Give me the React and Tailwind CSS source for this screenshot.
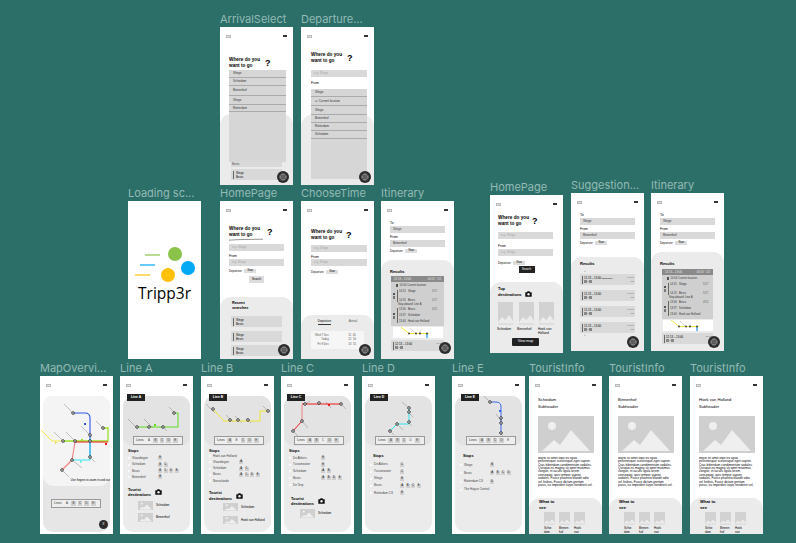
import React from 'react';

const Frame = ({ label, pos, children }) => (
  <div className={`absolute w-[73px] ${pos}`}>
    <div className="h-[15px] text-[11px] leading-[14px] text-[#94bab5] whitespace-nowrap font-['Inter',sans-serif]">{label}</div>
    <div className="relative h-[158px] flex flex-col overflow-hidden bg-white text-black text-[3px] font-['Liberation_Sans',sans-serif]">
      {children}
    </div>
  </div>
);

const StatusBar = () => (
  <div className="h-[11px] shrink-0 flex justify-between items-start px-[6px] pt-[8px]">
    <div className="w-[5px] h-[3px] border-[0.5px] border-[#bbb] bg-[#e5e5e5]" />
    <div className="w-[4px] h-[2px] bg-[#333]" />
  </div>
);

const Fab = ({ pos }) => (
  <div className={`absolute w-[12px] h-[12px] rounded-full bg-[#2c2c2c] flex items-center justify-center ${pos}`}>
    <svg width="8" height="8" viewBox="0 0 8 8" fill="none" stroke="#bbb" strokeWidth="0.7">
      <rect x="2" y="1" width="4" height="6" rx="1.2" />
      <path d="M4 1v6M1 2.5v3M7 2.5v3" />
    </svg>
  </div>
);

const Title = ({ cls, gap }) => (
  <div className={`relative flex items-center ${cls}`}>
    <div className="text-[4.7px] leading-[6px] font-bold whitespace-nowrap">Where do you<br />want to go</div>
    <div className={`text-[9px] leading-[9px] font-bold ${gap}`}>?</div>
  </div>
);

const Input = ({ text, cls = '', dark }) => (
  <div className={`mx-[9px] h-[7px] shrink-0 bg-[#d9d9d9] flex items-center px-[3px] text-[3px] ${dark ? 'text-[#333]' : 'text-[#a5a5a5]'} ${cls}`}>{text}</div>
);

const Lab = ({ text, cls = '' }) => (
  <div className={`mx-[9px] h-[4px] shrink-0 text-[3.4px] leading-[4px] font-medium ${cls}`}>{text}</div>
);

const Departure = ({ cls = '', chip = 'Now' }) => (
  <div className={`mx-[9px] h-[4px] shrink-0 flex items-center gap-[2px] text-[2.8px] ${cls}`}>
    <span className="font-medium">Departure:</span>
    <span className="w-[12px] h-[4px] bg-[#ddd] text-center text-[2.6px] leading-[4px]">{chip}</span>
  </div>
);

const Panel = ({ cls, children }) => (
  <div className={`mt-auto shrink-0 bg-[#ebebeb] rounded-t-[11px] ${cls}`}>{children}</div>
);

const Recent = ({ cls = '', a = 'Slinge', b = 'Beurs' }) => (
  <div className={`h-[11px] bg-[#d9d9d9] flex items-center px-[2px] gap-[2px] text-[2.8px] leading-[4px] ${cls}`}>
    <div className="w-[1px] h-[8px] bg-[#666]" />
    <div>{a}<br />{b}</div>
  </div>
);

const DropRows = ({ rows }) => (
  <>
    {rows.map((r) => (
      <div key={r.t + r.h} className={`border-b-[0.5px] border-[#aaa] px-[4px] text-[3px] text-[#333] flex items-center gap-[1px] ${r.h}`}>{r.t}</div>
    ))}
  </>
);

const Camera = () => (
  <svg width="7" height="6" viewBox="0 0 7 6" className="shrink-0">
    <path d="M0.3 1.3h1.6l.6-1h2l.6 1h1.6v4.4H.3z" fill="#111" />
    <circle cx="3.5" cy="3.3" r="1.2" fill="#eee" />
  </svg>
);

const Pic = ({ w, h }) => (
  <svg width={w} height={h} viewBox="0 0 56 37" preserveAspectRatio="none" className="shrink-0">
    <rect width="56" height="37" fill="#cfcfcf" />
    <circle cx="14" cy="10" r="4" fill="#efefef" />
    <path d="M4 35 16 24l6 5 11-15 19 21z" fill="#efefef" />
  </svg>
);

const Bookmark = ({ w, h }) => (
  <svg width={w} height={h} viewBox="0 0 15 23" preserveAspectRatio="none" className="shrink-0">
    <rect width="15" height="20" fill="#d2d2d2" />
    <path d="M0 20 4 15l3.5 3L11 13l4 6v1z" fill="#ebebeb" />
    <rect y="21" width="15" height="2" fill="#dedede" />
  </svg>
);

const Tick = ({ x, y, l = 9 }) => <line x1={x - l} y1={y - l} x2={x + l * 0.2} y2={y + l * 0.2} stroke="#888" strokeWidth="0.5" />;
const Stn = ({ x, y }) => <circle cx={x} cy={y} r="1.3" fill="#fff" stroke="#111" strokeWidth="0.8" />;

const LinesBox = ({ active, cls }) => (
  <div className={`relative w-[50px] h-[9px] border-[0.5px] border-[#999] bg-[#eee] flex items-center gap-[1.8px] px-[2px] text-[3.2px] text-[#333] ${cls}`}>
    <span className="mr-[1px]">Lines</span>
    {['A', 'B', 'C', 'D', 'E'].map((l) => (
      <span key={l} className={`w-[4.8px] h-[4.8px] flex items-center justify-center text-[2.8px] ${l === active ? '' : 'bg-[#cfcfcf]'}`}>{l}</span>
    ))}
  </div>
);

const Stop = ({ name, lines, h = 'h-[6.4px]', w = 'w-[26px]' }) => (
  <div className={`flex items-center ${h}`}>
    <span className="w-[2px] h-[2px] rounded-full bg-white mr-[2px]" />
    <span className={`text-[3px] text-[#444] whitespace-nowrap ${w}`}>{name}</span>
    <span className="flex gap-[1.5px]">
      {lines.map((l) => (
        <span key={l} className="w-[4px] h-[4px] bg-[#cfcfcf] flex items-center justify-center text-[2.6px]">{l}</span>
      ))}
    </span>
  </div>
);

const Dest = ({ name, w, h, cls }) => (
  <div className={`flex items-center gap-[3px] text-[3px] font-medium ${cls}`}>
    <Pic w={w} h={h} />
    <span className="whitespace-nowrap">{name}</span>
  </div>
);

const LineScreen = ({ letter, chipPos, box, children, body }) => (
  <>
    <StatusBar />
    <div className="relative mx-[3px] mt-[9px] h-[136px] bg-[#ebebeb] rounded-[10px]">
      <div className="h-[50px] bg-[#e3e3e3] rounded-[10px]">
        <svg width="67" height="50" viewBox="3 20 67 50" className="overflow-visible">{children}</svg>
      </div>
      <div className={`absolute top-[-2px] w-[18px] h-[7px] bg-[#222] text-white text-[3.4px] font-bold flex items-center justify-center ${chipPos}`}>Line {letter}</div>
      <LinesBox active={letter} cls={`mt-[-10px] ${box}`} />
      {body}
    </div>
  </>
);

const StopsHead = ({ cls }) => <div className={`text-[3.8px] leading-[4px] font-bold ${cls}`}>Stops</div>;

const TouristHead = ({ cls }) => (
  <div className={`flex items-center gap-[4px] text-[3.9px] leading-[5.5px] font-bold ${cls}`}>
    <div className="whitespace-nowrap">Tourist<br />destinations</div>
    <Camera />
  </div>
);

const Tourist = ({ name, labels }) => (
  <>
    <StatusBar />
    <div className="mx-[9px] mt-[10px] text-[4.1px] leading-[6.8px] font-medium whitespace-nowrap">{name}<br />Subheader</div>
    <div className="mx-[9px] mt-[5px]"><Pic w={56} h={37} /></div>
    <p className="mx-[9px] mt-[4px] text-[3.15px] leading-[3.45px] text-black h-[38px] overflow-hidden">
      Morbi sit amet odio eu ligula pellentesque scelerisque eget sapien. Cras bibendum condimentum sodales. Quisque eu magna sit amet maximus congue, in iaculis ligula lorem consequat, quis tempor sapien sodales. Fusce pharetra blandit odio vel finibus. Fusce dictum pretium purus, eu imperdiet turpis hendrerit vel.
    </p>
    <Panel cls="h-[36px] px-[10px] pt-[1px]">
      <div className="text-[4.2px] leading-[5.8px] font-bold">What to<br />see</div>
      <div className="flex gap-[4px] ml-[5px] mt-[1.5px]">
        {labels.map((l) => (
          <div key={l[0]} className="w-[11px]">
            <Bookmark w={11} h={13} />
            <div className="mt-[1px] text-[3px] leading-[4px]">{l[0]}<br />{l[1]}</div>
          </div>
        ))}
      </div>
    </Panel>
  </>
);

const TripCard = ({ cls = '', tag }) => (
  <div className={`h-[11px] bg-[#d9d9d9] flex items-center px-[1.5px] gap-[1.5px] text-[2.8px] ${cls}`}>
    <div className="w-[1px] h-[8px] bg-[#666]" />
    <div className="flex-1 leading-[4px]">
      <div className="whitespace-nowrap">12:13 – 13:40 {tag && <span className="text-[2.2px]">{tag}</span>}</div>
      <div className="flex items-center gap-[1px]">
        <span className="w-[2.5px] h-[3px] bg-[#888]" />›<span className="w-[2.5px] h-[3px] bg-[#888]" />
      </div>
    </div>
    <div className="text-right leading-[4px] text-[2.4px] text-[#666]">00:13<br />1/2</div>
  </div>
);

const TripLeg = ({ rows, h }) => (
  <div className={`flex items-center gap-[1px] ${h}`}>
    <div className="w-[4px] flex flex-col items-center gap-[1px]">
      <span className="w-[2px] h-[2px] bg-[#555]" />
      <span className="w-[2.5px] h-[3px] bg-[#777]" />
    </div>
    <div className="w-[1px] self-stretch bg-[#666] my-[1px]" />
    <div className="flex-1 flex flex-col justify-between self-stretch py-[1px]">
      {rows.map((r) => (
        <div key={r[0] + r[1]} className="flex whitespace-nowrap">
          <span className="w-[9px]">{r[0]}</span>
          <span className="w-[24px] font-medium">{r[1]}</span>
          <span className="text-[#666]">{r[2]}</span>
        </div>
      ))}
    </div>
  </div>
);

const TripMap = () => (
  <svg width="50" height="11" viewBox="0 0 50 11" className="mx-auto bg-white">
    <path d="M8 0 16 6.5h20" fill="none" stroke="#f5e642" strokeWidth="1" />
    <path d="M34 7V11" stroke="#2196f3" strokeWidth="1.2" />
    <line x1="17" y1="1" x2="22" y2="6" stroke="#999" strokeWidth="0.4" />
    <line x1="28" y1="3" x2="26" y2="7" stroke="#999" strokeWidth="0.4" />
    <circle cx="16" cy="6.5" r="0.9" fill="#333" />
    <circle cx="23" cy="6.5" r="0.9" fill="#333" />
    <circle cx="27" cy="6.5" r="0.9" fill="#333" />
    <circle cx="34" cy="6.5" r="0.9" fill="#333" />
  </svg>
);

const TripDetail = ({ cls }) => (
  <div className={`flex flex-col text-[2.7px] leading-[3px] ${cls}`}>
    <div className="h-[6px] bg-[#8a8a8a] flex items-center justify-between px-[3px] text-[#e5e5e5] text-[2.8px]">
      <span>12:13 – 13:40</span><span>00:13 · 1/2</span>
    </div>
    <div className="h-[44px] bg-[#cfcfcf] text-[#333] px-[1px] overflow-hidden">
      <div className="h-[7px] flex items-center gap-[2px] pl-[4px]"><span className="w-[1.5px] h-[3px] bg-[#555]" />14:04 Current location</div>
      <TripLeg h="h-[14px]" rows={[['14:15', 'Slinge', '5/17'], ['14:25', 'Beurs', '5/17']]} />
      <div className="h-[4px] pl-[6px]">Stay aboard: Line A</div>
      <TripLeg h="h-[17px]" rows={[['13:30', 'Beurs', '4/15'], ['13:37', 'Schiedam', ''], ['13:40', 'Hook van Holland', '']]} />
    </div>
    <div className="mt-[1px]"><TripMap /></div>
  </div>
);

const ToFrom = () => (
  <>
    <StatusBar />
    <Lab text="To" cls="mt-[9px]" />
    <Input text="Slinge" dark cls="mt-[1px]" />
    <Lab text="From" cls="mt-[2px]" />
    <Input text="Binnenhof" dark cls="mt-[1px]" />
    <Departure cls="mt-[2px]" />
  </>
);

export default function App() {
  return (
    <div className="relative w-[796px] h-[543px] overflow-hidden bg-[#2b6f68]">
      <Frame label="ArrivalSelect" pos="left-[220px] top-[12px]">
        <StatusBar />
        <Title cls="ml-[9px] mt-[19px]" gap="ml-[5px]" />
        <Panel cls="h-[71px] pt-[47px] px-[11px]">
          <div className="h-[6px] bg-[#d9d9d9] flex items-center px-[1px] text-[2.8px] text-[#444]">Beurs</div>
          <div className="relative mt-[2px]">
            <Recent />
          </div>
        </Panel>
        <div className="absolute left-[9px] top-[43px] w-[57px] h-[92px] bg-[#d6d6d6]">
          <DropRows rows={[
            { t: 'Slinge', h: 'h-[8px]' },
            { t: 'Schiedam', h: 'h-[8px]' },
            { t: 'Binnenhof', h: 'h-[10px]' },
            { t: 'Slinge', h: 'h-[9px]' },
            { t: 'Rotterdam', h: 'h-[7px]' },
          ]} />
        </div>
        <Fab pos="left-[57px] top-[144px]" />
      </Frame>

      <Frame label="Departure..." pos="left-[301px] top-[12px]">
        <StatusBar />
        <Title cls="ml-[10px] mt-[14px]" gap="ml-[5px]" />
        <Input text="e.g. Slinge" cls="mt-[6px] ml-[10px] mr-[7px]" />
        <Lab text="From" cls="mt-[4px] ml-[10px]" />
        <Panel cls="h-[70px]" />
        <div className="absolute left-[10px] top-[62px] w-[56px] h-[90px] bg-[#d6d6d6]">
          <DropRows rows={[
            { t: 'Slinge', h: 'h-[8px]' },
            { t: '⊙ Current location', h: 'h-[9px]' },
            { t: 'Slinge', h: 'h-[9px]' },
            { t: 'Binnenhof', h: 'h-[8px]' },
            { t: 'Rotterdam', h: 'h-[8px]' },
            { t: 'Schiedam', h: 'h-[8px]' },
          ]} />
        </div>
        <Fab pos="left-[58px] top-[144px]" />
      </Frame>

      <Frame label="Loading sc..." pos="left-[128px] top-[186px]">
        <div className="relative mt-[22px] h-[61px]">
          <svg width="73" height="60" viewBox="0 22 73 60">
            <line x1="17" y1="54" x2="32" y2="54" stroke="#8bc34a" strokeWidth="1.2" />
            <line x1="12" y1="64" x2="27" y2="64" stroke="#03a9f4" strokeWidth="1.2" />
            <line x1="7" y1="74" x2="22" y2="74" stroke="#ffc107" strokeWidth="1.2" />
            <circle cx="47" cy="53" r="7" fill="#8bc34a" />
            <circle cx="60" cy="67" r="7" fill="#03a9f4" />
            <circle cx="40" cy="74" r="7" fill="#ffc107" />
          </svg>
        </div>
        <div className="text-center text-[15.5px] leading-[18px] font-['Open_Sans',sans-serif]">Tripp3r</div>
      </Frame>

      <Frame label="HomePage" pos="left-[220px] top-[186px]">
        <StatusBar />
        <Title cls="ml-[9px] mt-[14px]" gap="ml-[7px]" />
        <svg width="36" height="3" viewBox="0 0 36 3" className="ml-[9px] mt-[0px]">
          <path d="M0 2.2C8 1.6 12 1.5 34 1.2" fill="none" stroke="#222" strokeWidth="0.5" />
        </svg>
        <Input text="e.g. Slinge" cls="mt-[3px]" />
        <Lab text="From" cls="mt-[3px]" />
        <Input text="e.g. Slinge" cls="mt-[1px]" />
        <Departure cls="mt-[3px]" chip="Now" />
        <div className="mx-auto mt-[3px] w-[15px] h-[7px] bg-[#ddd] text-[3px] flex items-center justify-center">Search</div>
        <Panel cls="h-[62px] pt-[4px]">
          <div className="ml-[12px] text-[3.8px] leading-[5px] font-bold">Recent<br />searches</div>
          <Recent cls="mx-[11px] mt-[5px]" />
          <Recent cls="mx-[11px] mt-[4px]" />
          <Recent cls="mx-[11px] mt-[3px]" />
        </Panel>
        <Fab pos="left-[58px] top-[143px]" />
      </Frame>

      <Frame label="ChooseTime" pos="left-[301px] top-[186px]">
        <StatusBar />
        <Title cls="ml-[10px] mt-[17px]" gap="ml-[4px]" />
        <Input text="e.g. Slinge" cls="mt-[4px] ml-[10px] mr-[7px]" />
        <Lab text="From" cls="mt-[3px] ml-[10px]" />
        <Input text="e.g. Slinge" cls="mt-[0px] ml-[10px] mr-[7px]" />
        <Departure cls="mt-[4px] ml-[10px]" />
        <Panel cls="h-[44px]">
          <div className="flex justify-around px-[8px] pt-[4px] text-[3px]">
            <span className="border-b-[0.3px] border-[#333]">Departure</span>
            <span className="text-[#555]">Arrival</span>
          </div>
          <div className="mx-[10px] mt-[6px] h-[18px] bg-[#f6f6f6] text-[2.8px] text-[#555] leading-[4.8px] pt-[2px] px-[4px] flex justify-between">
            <div className="text-right">Wed 7 Dec<br />Today<br />Fri 9 Dec</div>
            <div className="text-center pr-[4px]">11&nbsp;&nbsp;45<br />12&nbsp;&nbsp;50<br />13&nbsp;&nbsp;55</div>
          </div>
        </Panel>
        <Fab pos="left-[58px] top-[143px]" />
      </Frame>

      <Frame label="Itinerary" pos="left-[381px] top-[186px]">
        <ToFrom />
        <Panel cls="h-[99px] pt-[10px] px-[10px]">
          <div className="ml-[-1px] h-[4px] text-[4px] leading-[4px] font-bold">Results</div>
          <TripDetail cls="mt-[2px]" />
          <TripCard cls="mt-[2px]" />
        </Panel>
        <Fab pos="left-[58px] top-[141px]" />
      </Frame>

      <Frame label="HomePage" pos="left-[490px] top-[180px]">
        <StatusBar />
        <Title cls="ml-[8px] mt-[9px]" gap="ml-[3px]" />
        <Input text="e.g. Slinge" cls="mt-[5px] ml-[8px] mr-[10px]" />
        <Lab text="From" cls="mt-[5px] ml-[8px]" />
        <Input text="e.g. Slinge" cls="mt-[1px] ml-[8px] mr-[10px]" />
        <Departure cls="mt-[5px] ml-[8px]" />
        <div className="mx-auto mt-[1px] w-[16px] h-[7px] bg-[#222] text-white text-[3px] flex items-center justify-center">Search</div>
        <Panel cls="h-[71px] pt-[4px] relative">
          <div className="flex items-center gap-[2px] ml-[8px]">
            <div className="text-[4px] leading-[6px] font-bold whitespace-nowrap">Top<br />destinations</div>
            <div className="ml-[1px] mt-[3px]"><Camera /></div>
          </div>
          <div className="flex ml-[8px] mt-[4px] gap-[5.5px]">
            <Bookmark w={15} h={23} />
            <Bookmark w={15} h={23} />
            <Bookmark w={15} h={23} />
          </div>
          <div className="flex ml-[7px] mt-[2px] gap-[2px] text-[3.2px] leading-[4px]">
            <span className="w-[18px]">Schiedam</span>
            <span className="w-[19px]">Binnenhof</span>
            <span className="w-[18px]">Hoek van<br />Holland</span>
          </div>
          <div className="absolute left-[22px] top-[56px] w-[27px] h-[8px] rounded-[1px] bg-[#222] text-white text-[3.6px] font-medium flex items-center justify-center">View map</div>
        </Panel>
      </Frame>

      <Frame label="Suggestion..." pos="left-[571px] top-[178px]">
        <ToFrom />
        <Panel cls="h-[94px] pt-[5px]">
          <div className="ml-[9px] h-[4px] text-[4px] leading-[4px] font-bold">Results</div>
          <div className="ml-[13px] mt-[3px] h-[4px] leading-[4px] text-[#777]">+</div>
          <TripCard tag="Suggested" cls="mx-[9px] mt-[1px]" />
          <TripCard cls="mx-[9px] mt-[5px]" />
          <TripCard cls="mx-[9px] mt-[5px]" />
          <TripCard cls="mx-[9px] mt-[5px]" />
          <div className="ml-[13px] h-[4px] leading-[4px] text-[#777]">+</div>
        </Panel>
        <Fab pos="left-[56px] top-[143px]" />
      </Frame>

      <Frame label="Itinerary" pos="left-[651px] top-[178px]">
        <ToFrom />
        <Panel cls="h-[99px] pt-[10px] px-[11px]">
          <div className="ml-[-2px] h-[4px] text-[4px] leading-[4px] font-bold">Results</div>
          <TripDetail cls="mt-[3px]" />
          <TripCard cls="mt-[2px]" />
        </Panel>
        <Fab pos="left-[57px] top-[143px]" />
      </Frame>

      <Frame label="MapOvervi..." pos="left-[40px] top-[361px]">
        <StatusBar />
        <div className="mx-[3px] mt-[9px] h-[136px] bg-[#e6e6e6] rounded-[10px]">
          <div className="h-[90px] bg-[#f4f4f4] rounded-[10px]">
            <svg width="67" height="81" viewBox="3 20 67 81" className="overflow-visible block">
              <Tick x={33} y={37} /><Tick x={63} y={52} l={7} /><Tick x={50} y={59} /><Tick x={23} y={65} /><Tick x={35} y={65} />
              <line x1="32" y1="84" x2="42" y2="92" stroke="#888" strokeWidth="0.5" />
              <line x1="50" y1="81" x2="55" y2="86" stroke="#888" strokeWidth="0.5" />
              <line x1="22" y1="94" x2="29" y2="101" stroke="#888" strokeWidth="0.5" />
              <path d="M1 54 12 65h11" fill="none" stroke="#f5ea4a" strokeWidth="1" />
              <path d="M23 65h45V52h-5" fill="none" stroke="#9ae02a" strokeWidth="1.3" />
              <path d="M35 66h33" fill="none" stroke="#f01a1a" strokeWidth="1.2" />
              <path d="M35 66 32 84" fill="none" stroke="#f08a8a" strokeWidth="1.2" />
              <path d="M32 84 22 94" fill="none" stroke="#f08a8a" strokeWidth="1.4" />
              <path d="M33 37h12q5 0 5 5v39" fill="none" stroke="#2f55e8" strokeWidth="1.1" />
              <path d="M50 62V84H32" fill="none" stroke="#2fe6ea" strokeWidth="1" />
              <rect x="44" y="47" width="2" height="2" fill="#2f55e8" />
              <rect x="15" y="66" width="1.5" height="1.5" fill="#e0d020" />
              <rect x="41" y="63" width="2" height="2" fill="#9ae02a" />
              <rect x="65" y="67" width="2" height="2" fill="#f01a1a" />
              <rect x="40" y="85" width="1.5" height="1.5" fill="#2fe6ea" />
              <Stn x={33} y={37} /><Stn x={63} y={52} /><Stn x={50} y={59} /><Stn x={23} y={65} /><Stn x={35} y={65} /><Stn x={50} y={65} /><Stn x={50} y={81} /><Stn x={32} y={84} /><Stn x={22} y={94} />
            </svg>
            <div className="text-right text-[2.9px] leading-[6px] whitespace-nowrap">Use fingers to zoom in and out</div>
          </div>
          <LinesBox active="A" cls="ml-[8px] mt-[13px]" />
        </div>
        <div className="absolute left-[59px] top-[144px] w-[9px] h-[9px] rounded-full bg-[#2c2c2c] text-white text-[3.4px] flex items-center justify-center">X</div>
      </Frame>

      <Frame label="Line A" pos="left-[120px] top-[361px]">
        <LineScreen letter="A" chipPos="left-[4px]" box="ml-[10px]" body={
          <div className="px-[5px]">
            <StopsHead cls="mt-[4px] mb-[2px]" />
            <Stop name="Vlaardingen" lines={['E']} />
            <Stop name="Schiedam" lines={['B', 'C']} />
            <Stop name="Beurs" lines={['B', 'C', 'D', 'E']} />
            <Stop name="Binnenhof" lines={['B']} />
            <TouristHead cls="mt-[6px]" />
            <Dest name="Schiedam" w={15} h={9} cls="ml-[10px] mt-[3px]" />
            <Dest name="Binnenhof" w={15} h={9} cls="ml-[10px] mt-[3px]" />
          </div>
        }>
          <line x1="8" y1="43" x2="17" y2="52" stroke="#888" strokeWidth="0.5" /><line x1="24" y1="43" x2="33" y2="52" stroke="#888" strokeWidth="0.5" /><line x1="43" y1="51" x2="47" y2="55" stroke="#888" strokeWidth="0.5" /><line x1="49" y1="31" x2="56" y2="38" stroke="#888" strokeWidth="0.5" />
          <path d="M17 51H58V37H54" fill="none" stroke="#5fdc1f" strokeWidth="1" />
          <rect x="34" y="48" width="2" height="2" fill="#5fdc1f" />
          <Stn x={17} y={51} /><Stn x={29} y={51} /><Stn x={43} y={51} /><Stn x={54} y={37} />
        </LineScreen>
      </Frame>

      <Frame label="Line B" pos="left-[201px] top-[361px]">
        <LineScreen letter="B" chipPos="left-[5px]" box="ml-[10px]" body={
          <div className="px-[5px]">
            <StopsHead cls="mt-[4px] mb-[0px]" />
            <Stop name="Hoek van Holland" lines={[]} h="h-[5.5px]" />
            <Stop name="Vlaardingen" lines={['A']} h="h-[7px]" />
            <Stop name="Schiedam" lines={['A', 'C']} h="h-[6px]" />
            <Stop name="Beurs" lines={['A', 'C', 'D', 'E']} h="h-[6px]" />
            <Stop name="Nesselande" lines={[]} h="h-[6.5px]" />
            <TouristHead cls="mt-[6px]" />
            <Dest name="Schiedam" w={15} h={8} cls="ml-[14px] mt-[2px]" />
            <Dest name="Hoek van Holland" w={15} h={8} cls="ml-[14px] mt-[5px]" />
          </div>
        }>
          <line x1="5" y1="28" x2="14" y2="37" stroke="#888" strokeWidth="0.5" /><line x1="25" y1="39" x2="32" y2="46" stroke="#888" strokeWidth="0.5" /><line x1="34" y1="40" x2="41" y2="47" stroke="#888" strokeWidth="0.5" /><line x1="45" y1="42" x2="50" y2="47" stroke="#888" strokeWidth="0.5" /><line x1="62" y1="30" x2="68" y2="36" stroke="#888" strokeWidth="0.5" />
          <path d="M12 33 23 45H59V35H67" fill="none" stroke="#f2e52e" strokeWidth="1" />
          <Stn x={12} y={33} /><Stn x={29} y={44} /><Stn x={37} y={44} /><Stn x={47} y={44} /><Stn x={67} y={35} />
        </LineScreen>
      </Frame>

      <Frame label="Line C" pos="left-[281px] top-[361px]">
        <LineScreen letter="C" chipPos="left-[3px]" box="ml-[10px]" body={
          <div className="px-[5px]">
            <StopsHead cls="mt-[4px] mb-[2px]" />
            <Stop name="De Akkers" lines={['E']} h="h-[6px]" w="w-[28px]" />
            <Stop name="Tussenwater" lines={['E']} h="h-[7px]" w="w-[28px]" />
            <Stop name="Schiedam" lines={['A', 'B']} h="h-[6.5px]" w="w-[28px]" />
            <Stop name="Beurs" lines={['A', 'B', 'D', 'E']} h="h-[7px]" w="w-[28px]" />
            <Stop name="De Terp" lines={[]} h="h-[7px]" w="w-[28px]" />
            <TouristHead cls="mt-[7px] ml-[2px]" />
            <Dest name="Schiedam" w={15} h={9} cls="ml-[11px] mt-[2px]" />
          </div>
        }>
          <line x1="45" y1="26" x2="50" y2="32" stroke="#888" strokeWidth="0.5" /><line x1="60" y1="28" x2="65" y2="33" stroke="#888" strokeWidth="0.5" /><line x1="21" y1="45" x2="27" y2="52" stroke="#888" strokeWidth="0.5" /><line x1="12" y1="55" x2="17" y2="60" stroke="#888" strokeWidth="0.5" /><line x1="24" y1="28" x2="29" y2="25" stroke="#888" strokeWidth="0.5" />
          <path d="M12 55 21 45" fill="none" stroke="#f01a1a" strokeWidth="1" />
          <path d="M21 45V29" fill="none" stroke="#f08a8a" strokeWidth="1.1" />
          <path d="M21 28H60" fill="none" stroke="#f01a1a" strokeWidth="1" />
          <rect x="47" y="28" width="2" height="2" fill="#f01a1a" />
          <Stn x={12} y={55} /><Stn x={21} y={45} /><Stn x={24} y={28} /><Stn x={38} y={27} /><Stn x={60} y={28} />
        </LineScreen>
      </Frame>

      <Frame label="Line D" pos="left-[362px] top-[361px]">
        <LineScreen letter="D" chipPos="left-[5px]" box="ml-[10px]" body={
          <div className="px-[5px]">
            <StopsHead cls="mt-[9px] mb-[3px] ml-[3px]" />
            <Stop name="De Akkers" lines={['C']} h="h-[7px]" />
            <Stop name="Tussenwater" lines={['C']} h="h-[7px]" />
            <Stop name="Slinge" lines={['E']} h="h-[7px]" />
            <Stop name="Beurs" lines={['A', 'B', 'C', 'E']} h="h-[7px]" />
            <Stop name="Rotterdam CS" lines={['E']} h="h-[8px]" />
          </div>
        }>
          <line x1="40" y1="26" x2="47" y2="32" stroke="#888" strokeWidth="0.5" /><line x1="47" y1="37" x2="51" y2="41" stroke="#888" strokeWidth="0.5" /><line x1="35" y1="48" x2="41" y2="54" stroke="#888" strokeWidth="0.5" /><line x1="47" y1="47" x2="50" y2="50" stroke="#888" strokeWidth="0.5" /><line x1="28" y1="55" x2="32" y2="59" stroke="#888" strokeWidth="0.5" />
          <path d="M28 55 35 48H47V32" fill="none" stroke="#2fe6ea" strokeWidth="1" />
          <Stn x={28} y={55} /><Stn x={35} y={48} /><Stn x={47} y={46} /><Stn x={47} y={36} /><Stn x={47} y={32} />
        </LineScreen>
      </Frame>

      <Frame label="Line E" pos="left-[452px] top-[361px]">
        <LineScreen letter="E" chipPos="left-[6px]" box="ml-[11px]" body={
          <div className="px-[5px]">
            <StopsHead cls="mt-[9px] mb-[3px] ml-[3px]" />
            <Stop name="Slinge" lines={['B']} h="h-[8px]" />
            <Stop name="Beurs" lines={['A', 'B', 'C', 'D']} h="h-[8px]" />
            <Stop name="Rotterdam CS" lines={['D']} h="h-[9px]" />
            <Stop name="The Hague Central" lines={[]} h="h-[7px]" />
          </div>
        }>
          <line x1="32" y1="20" x2="38" y2="26" stroke="#888" strokeWidth="0.5" /><line x1="44" y1="38" x2="50" y2="46" stroke="#888" strokeWidth="0.5" /><line x1="47" y1="56" x2="51" y2="60" stroke="#888" strokeWidth="0.5" />
          <path d="M38 26H44Q49 26 49 31V57" fill="none" stroke="#3a6aec" strokeWidth="1" />
          <rect x="47" y="34" width="2" height="2" fill="#3a6aec" />
          <Stn x={38} y={26} /><Stn x={49} y={42} /><Stn x={49} y={47} /><Stn x={49} y={57} />
        </LineScreen>
      </Frame>

      <Frame label="TouristInfo" pos="left-[529px] top-[361px]">
        <Tourist name="Schiedam" labels={[['Schie', 'dam'], ['Binnen', 'hof'], ['Hoek', 'van']]} />
      </Frame>
      <Frame label="TouristInfo" pos="left-[609px] top-[361px]">
        <Tourist name="Binnenhof" labels={[['Schie', 'dam'], ['Binnen', 'hof'], ['Hoek', 'van']]} />
      </Frame>
      <Frame label="TouristInfo" pos="left-[690px] top-[361px]">
        <Tourist name="Hoek van Holland" labels={[['Schie', 'dam'], ['Binnen', 'hof'], ['Hoek', 'van']]} />
      </Frame>
    </div>
  );
}
